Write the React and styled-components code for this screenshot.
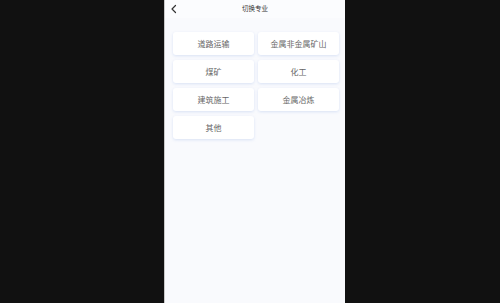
import React from 'react';
import styled, { createGlobalStyle } from 'styled-components';

const GlobalStyle = createGlobalStyle`
  html, body {
    margin: 0;
    padding: 0;
    background: #111111;
    font-family: "Noto Sans CJK SC", "Noto Sans", sans-serif;
  }
`;

const Stage = styled.div`
  display: flex;
  justify-content: center;
  width: 500px;
  height: 303px;
  padding-left: 9px;
  box-sizing: border-box;
`;

const Phone = styled.div`
  width: 181px;
  height: 303px;
  background: #f9fafd;
  border-left: 1px solid #c9c9c9;
  display: flex;
  flex-direction: column;
  box-sizing: border-box;
`;

const Header = styled.div`
  height: 18px;
  display: flex;
  align-items: center;
  justify-content: center;
  position: relative;
  background: #fbfcfe;
`;

const Back = styled.span`
  position: absolute;
  left: 5px;
  top: 4px;
  width: 8px;
  height: 10px;
  display: flex;
`;

const Title = styled.div`
  font-size: 6.5px;
  color: #333;
  line-height: 1;
  margin-top: -2px;
`;

const Grid = styled.div`
  display: grid;
  grid-template-columns: 81px 81px;
  column-gap: 4px;
  row-gap: 5px;
  padding: 14px 7px 0 8px;
`;

const Card = styled.div`
  height: 23px;
  background: #ffffff;
  border-radius: 3px;
  box-shadow: 0 1px 3px rgba(170, 190, 235, 0.4);
  display: flex;
  align-items: center;
  justify-content: center;
  font-size: 8px;
  color: #666;
`;

const majors = ['道路运输', '金属非金属矿山', '煤矿', '化工', '建筑施工', '金属冶炼', '其他'];

export default function App() {
  return (
    <>
      <GlobalStyle />
      <Stage>
        <Phone>
          <Header>
            <Back>
              <svg width="8" height="10" viewBox="0 0 8 10">
                <path d="M5.5 1.5 L2 5 L5.5 8.5" fill="none" stroke="#333" strokeWidth="1.2" strokeLinecap="round" strokeLinejoin="round" />
              </svg>
            </Back>
            <Title>切换专业</Title>
          </Header>
          <Grid>
            {majors.map((m) => (
              <Card key={m}>{m}</Card>
            ))}
          </Grid>
        </Phone>
      </Stage>
    </>
  );
}
